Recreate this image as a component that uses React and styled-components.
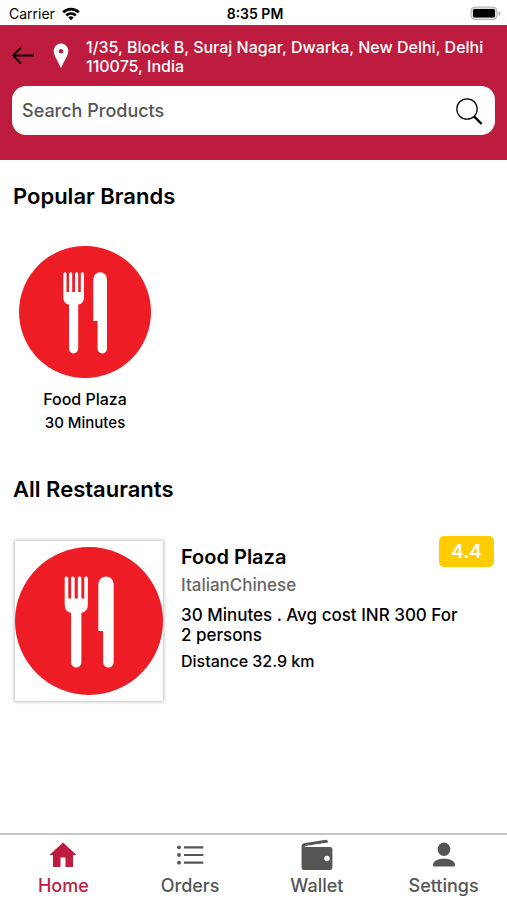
import React from 'react';
import styled, { createGlobalStyle } from 'styled-components';

const brands = [
    { id: 1, name: 'Food Plaza', time: '30 Minutes' }
];

const restaurants = [
    {
        id: 1,
        name: 'Food Plaza',
        cuisines: ['Italian', 'Chinese'],
        time: '30 Minutes',
        cost: 300,
        persons: 2,
        distance: 32.9,
        rating: 4.4
    }
];

const WifiIcon = () => (
    <svg width="18" height="14" viewBox="0 0 18 14" aria-hidden="true">
        <path d="M0.2 4.4A12.4 12.4 0 0 1 17.8 4.4L15.9 6.3A9.8 9.8 0 0 0 2.1 6.3Z" />
        <path d="M3.3 7.5A8.1 8.1 0 0 1 14.7 7.5L12.8 9.4A5.4 5.4 0 0 0 5.2 9.4Z" />
        <path d="M6.3 10.5A3.9 3.9 0 0 1 11.7 10.5L9 13.3Z" />
    </svg>
);

const BatteryIcon = () => (
    <svg width="31" height="16" viewBox="0 0 31 16" aria-hidden="true">
        <rect x="1" y="1" width="26" height="12.6" rx="4" fill="#ddd" stroke="#b4b4b4" strokeWidth="1" />
        <rect x="3" y="3" width="22" height="8.6" rx="1.6" />
        <path d="M28.6 5.2Q30.4 5.8 30.4 7.5T28.6 9.8Z" fill="#aaa" />
    </svg>
);

const BackIcon = () => (
    <svg width="24" height="20" viewBox="0 0 24 20" fill="none" stroke="#000" strokeWidth="1.8" aria-hidden="true">
        <path d="M22 8.5H1M9 0.5L1 8.5L9 16.5" />
    </svg>
);

const PinIcon = () => (
    <svg width="16" height="28" viewBox="0 0 16 28" aria-hidden="true">
        <path fill="#fff" fillRule="evenodd" d="M8 0.5A7.3 7.3 0 0 0 0.7 7.8C0.7 13 5.3 18.2 8 25.3C10.7 18.2 15.3 13 15.3 7.8A7.3 7.3 0 0 0 8 0.5ZM8 5.9A2.3 2.3 0 1 1 8 10.5A2.3 2.3 0 0 1 8 5.9Z" />
    </svg>
);

const SearchIcon = () => (
    <svg width="28" height="28" viewBox="0 0 28 28" fill="none" stroke="#000" aria-hidden="true">
        <circle cx="12" cy="12" r="10.2" strokeWidth="1.2" />
        <path d="M18.8 19.2L26.6 27" strokeWidth="2.4" />
    </svg>
);

const FoodLogo = () => (
    <Logo viewBox="0 0 132 132" role="img" aria-label="Food Plaza logo">
        <circle cx="66" cy="66" r="66" fill="#ee1c25" />
        <path fill="#fff" d="M44.3 27.2Q45.9 25.2 47.5 27.2V46H50V27.2Q51.6 25.2 53.2 27.2V46H56V27.2Q57.6 25.2 59.2 27.2V46H61.8V27.2Q63.4 25.2 65 27.2V51Q65 58 59.2 58.6V102.8A4.6 4.6 0 0 1 50 102.8V58.6Q44.3 58 44.3 51Z" />
        <path fill="#fff" d="M74.3 33.2A6.85 6.85 0 0 1 88 33.2V102.8A4.6 4.6 0 0 1 78.6 102.8V75H74.3Z" />
    </Logo>
);

const HomeIcon = () => (
    <svg width="32" height="32" viewBox="0 0 32 32" fill="currentColor" aria-hidden="true">
        <path d="M16 3.5L29.5 16H26V28H18.5V18.5H13.5V28H6V16H2.5Z" />
    </svg>
);

const OrdersIcon = () => (
    <svg width="32" height="32" viewBox="0 0 32 32" fill="currentColor" aria-hidden="true">
        <circle cx="5" cy="8.3" r="1.9" />
        <circle cx="5" cy="16" r="1.9" />
        <circle cx="5" cy="23.7" r="1.9" />
        <path d="M10 7.2H29.3V9.4H10ZM10 14.9H29.3V17.1H10ZM10 22.6H29.3V24.8H10Z" />
    </svg>
);

const WalletIcon = () => (
    <svg width="32" height="32" viewBox="0 0 32 32" fill="currentColor" aria-hidden="true">
        <path d="M0.6 7Q0.6 4.6 2.8 4.2L25 0.7Q26.8 0.5 27.2 3.6L4 7V8H29Q31.4 8 31.4 10.3V28.7Q31.4 31 29 31H3Q0.6 31 0.6 28.7ZM26 16.8A2.7 2.7 0 1 0 26 22.2A2.7 2.7 0 1 0 26 16.8Z" fillRule="evenodd" />
        <path d="M4 7.2L27.4 3.8V7.6H4Z" fill="#fff" />
    </svg>
);

const SettingsIcon = () => (
    <svg width="32" height="32" viewBox="0 0 32 32" fill="currentColor" aria-hidden="true">
        <ellipse cx="16" cy="10.2" rx="6.3" ry="6.8" />
        <path d="M5 25.5C5.5 17.8 26.5 17.8 27 25.5V26.4Q27 27.6 25.8 27.6H6.2Q5 27.6 5 26.4Z" />
    </svg>
);

const tabs = [
    { label: 'Home', icon: HomeIcon, active: true },
    { label: 'Orders', icon: OrdersIcon },
    { label: 'Wallet', icon: WalletIcon },
    { label: 'Settings', icon: SettingsIcon }
];

const App = () => (
    <Screen>
        <GlobalStyle />
        <StatusBar>
            <Carrier>Carrier <WifiIcon /></Carrier>
            <Clock>8:35 PM</Clock>
            <Battery><BatteryIcon /></Battery>
        </StatusBar>
        <Header>
            <AddressRow>
                <BackButton aria-label="Back"><BackIcon /></BackButton>
                <PinIcon />
                <Address>1/35, Block B, Suraj Nagar, Dwarka, New Delhi, Delhi 110075, India</Address>
            </AddressRow>
            <SearchBox>
                <SearchInput type="text" aria-label="Search Products" placeholder="Search Products" />
                <SearchButton aria-label="Search"><SearchIcon /></SearchButton>
            </SearchBox>
        </Header>
        <Main>
            <SectionTitle>Popular Brands</SectionTitle>
            <BrandList>
                {brands.map(brand => (
                    <Brand key={brand.id}>
                        <FoodLogo />
                        <BrandName>{brand.name}</BrandName>
                        <BrandTime>{brand.time}</BrandTime>
                    </Brand>
                ))}
            </BrandList>
            <SectionTitle>All Restaurants</SectionTitle>
            {restaurants.map(item => (
                <Restaurant key={item.id}>
                    <Thumb><FoodLogo /></Thumb>
                    <Details>
                        <Name>{item.name}</Name>
                        <Cuisines>{item.cuisines.join('')}</Cuisines>
                        <Cost>{`${item.time} . Avg cost INR ${item.cost} For ${item.persons} persons`}</Cost>
                        <Distance>{`Distance ${item.distance} km`}</Distance>
                    </Details>
                    <Rating>{item.rating}</Rating>
                </Restaurant>
            ))}
        </Main>
        <TabBar>
            {tabs.map(({ label, icon: Icon, active }) => (
                <Tab key={label} $active={active}>
                    <Icon />
                    {label}
                </Tab>
            ))}
        </TabBar>
    </Screen>
);

const GlobalStyle = createGlobalStyle`
    * {
        box-sizing: border-box;
    }
    body {
        margin: 0;
        background: #fff;
        color: #000;
        font-family: Inter, "Liberation Sans", sans-serif;
        font-weight: 500;
    }
    button, input {
        font: inherit;
        border: 0;
        padding: 0;
        background: none;
    }
    svg {
        display: block;
        flex-shrink: 0;
    }
    h1, h2, h3, p {
        margin: 0;
        font-weight: 500;
    }
`;

const Screen = styled.div`
    display: flex;
    flex-direction: column;
    min-height: 100vh;
`;

const StatusBar = styled.div`
    display: grid;
    grid-template-columns: 1fr auto 1fr;
    align-items: center;
    height: 25px;
    padding: 2px 6px 0 9px;
    font-size: 14px;
`;

const Carrier = styled.span`
    display: flex;
    align-items: center;
    gap: 7px;
    font-weight: 400;
`;

const Clock = styled.span`
    font-weight: 600;
`;

const Battery = styled.span`
    justify-self: end;
`;

const Header = styled.header`
    padding: 13px 12px 25px;
    background: #be1c3e;
`;

const AddressRow = styled.div`
    display: flex;
    align-items: center;
    gap: 17px;
    min-height: 38px;
    margin-bottom: 10px;
`;

const BackButton = styled.button`
    width: 24px;
`;

const Address = styled.p`
    flex: 1;
    color: #fff;
    font-size: 16px;
    line-height: 19px;
`;

const SearchBox = styled.div`
    display: flex;
    align-items: center;
    height: 49px;
    padding: 0 10px;
    border-radius: 14px;
    background: #fff;
`;

const SearchInput = styled.input`
    flex: 1;
    min-width: 0;
    font-size: 18px;
    outline: none;

    &::placeholder {
        color: #555;
        opacity: 1;
    }
`;

const SearchButton = styled.button`
    width: 30px;
`;

const Main = styled.main`
    flex: 1;
    padding: 21px 13px;
`;

const SectionTitle = styled.h2`
    font-size: 22px;
    font-weight: 600;
    line-height: 30px;
`;

const Logo = styled.svg`
    width: 100%;
`;

const BrandList = styled.div`
    display: flex;
    gap: 12px;
    padding: 35px 6px;
    margin-bottom: 4px;
`;

const Brand = styled.div`
    width: 132px;
    text-align: center;
`;

const BrandName = styled.h3`
    margin-top: 10px;
    font-size: 16px;
    line-height: 22px;
`;

const BrandTime = styled.p`
    margin-top: 1px;
    font-size: 15px;
    line-height: 24px;
`;

const Restaurant = styled.article`
    display: flex;
    align-items: flex-start;
    padding-top: 32px;
`;

const Thumb = styled.div`
    display: flex;
    align-items: center;
    flex-shrink: 0;
    width: 148px;
    height: 160px;
    margin: 5px 18px 0 2px;
    background: #fff;
    box-shadow: 0 0 3px 1px rgba(0, 0, 0, 0.25);
`;

const Details = styled.div`
    flex: 1;
    padding-top: 7px;
`;

const Name = styled.h3`
    font-size: 20px;
    font-weight: 600;
    line-height: 28px;
`;

const Cuisines = styled.p`
    color: #666;
    font-size: 17px;
    line-height: 28px;
`;

const Cost = styled.p`
    margin-top: 6px;
    margin-right: -24px;
    font-size: 17px;
    line-height: 20px;
`;

const Distance = styled.p`
    margin-top: 4px;
    font-size: 16px;
    line-height: 24px;
`;

const Rating = styled.span`
    width: 55px;
    border-radius: 5px;
    background: #fc0;
    color: #fff;
    font-size: 19px;
    font-weight: 600;
    line-height: 31px;
    text-align: center;
`;

const TabBar = styled.nav`
    display: grid;
    grid-template-columns: repeat(4, 1fr);
    height: 67px;
    border-top: 2px solid #c8c8c8;
    background: #fff;
`;

const Tab = styled.button`
    display: flex;
    flex-direction: column;
    align-items: center;
    gap: 3px;
    padding-top: 4px;
    color: ${props => props.$active ? '#be1c3e' : '#555'};
    font-size: 18px;
    line-height: 24px;
    cursor: pointer;
`;

export default App;
